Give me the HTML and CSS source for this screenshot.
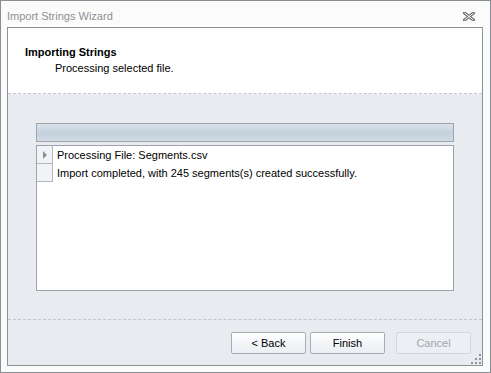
FILE: index.html
```html
<!DOCTYPE html>
<html lang="en">
<head>
<meta charset="utf-8">
<title>Import Strings Wizard</title>
<link rel="stylesheet" href="styles.css">
</head>
<body>
  <div class="window">
    <div class="titlebar">
      <span class="title">Import Strings Wizard</span>
      <svg class="close" width="12" height="9" viewBox="0 0 12 9">
        <path d="M1.5 1 L10.5 8 M10.5 1 L1.5 8" stroke="#6a6e74" stroke-width="3" stroke-linecap="square"/>
        <path d="M1.5 1 L10.5 8 M10.5 1 L1.5 8" stroke="#ffffff" stroke-width="1"/>
      </svg>
    </div>
    <div class="panel">
      <div class="header">
        <div class="heading">Importing Strings</div>
        <div class="subheading">Processing selected file.</div>
      </div>
      <div class="content">
        <div class="progress"></div>
        <div class="grid">
          <div class="row">
            <div class="indicator"><span class="arrow"></span></div>
            <div class="cell">Processing File: Segments.csv</div>
          </div>
          <div class="row">
            <div class="indicator"></div>
            <div class="cell">Import completed, with 245 segments(s) created successfully.</div>
          </div>
        </div>
      </div>
      <div class="footer">
        <button class="btn">&lt; Back</button>
        <button class="btn">Finish</button>
        <button class="btn disabled">Cancel</button>
        <div class="grip">
          <i></i><i></i><i></i><i></i><i></i><i></i>
        </div>
      </div>
    </div>
  </div>
</body>
</html>
```

FILE: styles.css
```css
* {
  margin: 0;
  padding: 0;
  box-sizing: border-box;
}
body {
  font-family: "Liberation Sans", Arial, sans-serif;
  font-size: 11px;
  color: #000;
  background: #fff;
}
.window {
  width: 491px;
  height: 373px;
  border: 1px solid #8b8f94;
  background: #fbfbfb;
  display: flex;
  flex-direction: column;
  padding: 0 7px 6px 6px;
}
.titlebar {
  height: 26px;
  display: flex;
  align-items: center;
  justify-content: space-between;
  padding-top: 3px;
}
.title {
  color: #8d9095;
  font-size: 11px;
}
.close {
  margin-right: 8px;
  margin-top: 1px;
}
.panel {
  flex: 1;
  border: 1px solid #8e9297;
  display: flex;
  flex-direction: column;
  position: relative;
}
.header {
  height: 66px;
  background: #fff;
  border-bottom: 1px dashed #c2c5ca;
  padding: 17px 0 0 17px;
}
.heading {
  font-weight: bold;
  font-size: 11px;
  line-height: 15px;
}
.subheading {
  padding-left: 30px;
  line-height: 17px;
}
.content {
  height: 226px;
  background: #e8ebf0;
  border-bottom: 1px dashed #c2c5ca;
  padding: 29px 28px 0 28px;
  display: flex;
  flex-direction: column;
  gap: 3px;
}
.progress {
  height: 19px;
  border: 1px solid #a0a5ac;
  background: linear-gradient(#dbe2ea, #c4d0dd 55%, #d3dce6);
}
.grid {
  height: 146px;
  border: 1px solid #9ea3a9;
  background: #fff;
}
.row {
  display: flex;
  height: 18px;
}
.indicator {
  width: 16px;
  border-right: 1px solid #b4b8be;
  border-bottom: 1px solid #b4b8be;
  background: #f1f3f6;
  display: flex;
  align-items: center;
  justify-content: center;
}
.arrow {
  width: 0;
  height: 0;
  border-top: 4px solid transparent;
  border-bottom: 4px solid transparent;
  border-left: 4px solid #8a8f96;
}
.cell {
  padding-left: 4px;
  line-height: 18px;
  white-space: nowrap;
}
.footer {
  flex: 1;
  background: #e8ebf0;
  display: flex;
  justify-content: flex-end;
  align-items: flex-start;
  padding: 12px 11px 0 0;
  gap: 4px;
}
.btn {
  width: 75px;
  height: 22px;
  font-family: inherit;
  font-size: 11px;
  color: #000;
  border: 1px solid #a8adb4;
  border-radius: 2px;
  background: linear-gradient(#ffffff, #f3f5f8 50%, #eceff3);
}
.btn.disabled {
  margin-left: 7px;
  color: #a3a6ab;
  border-color: #d2d5da;
  background: #eceff3;
}
.grip {
  position: absolute;
  right: 1px;
  bottom: 1px;
  width: 10px;
  height: 10px;
  display: grid;
  grid-template-columns: repeat(3, 2px);
  grid-template-rows: repeat(3, 2px);
  gap: 2px;
}
.grip i {
  background: #8f959d;
}
.grip i:nth-child(1) { grid-column: 3; grid-row: 1; }
.grip i:nth-child(2) { grid-column: 2; grid-row: 2; }
.grip i:nth-child(3) { grid-column: 3; grid-row: 2; }
.grip i:nth-child(4) { grid-column: 1; grid-row: 3; }
.grip i:nth-child(5) { grid-column: 2; grid-row: 3; }
.grip i:nth-child(6) { grid-column: 3; grid-row: 3; }
```
